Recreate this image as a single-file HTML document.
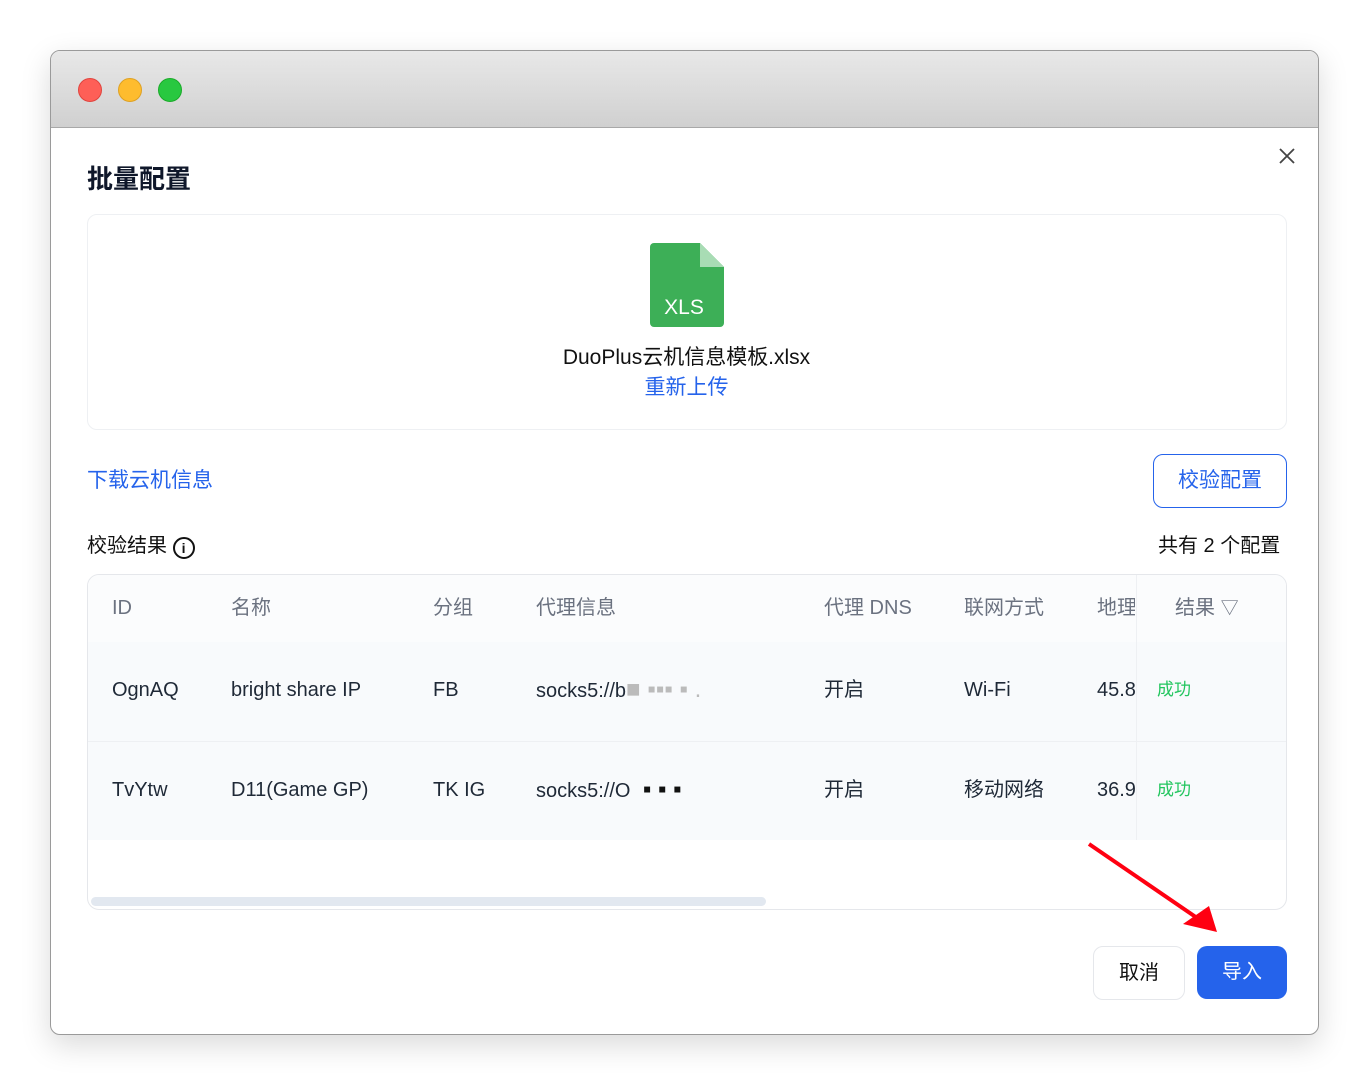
<!DOCTYPE html><html><head><meta charset="utf-8"><style>
body{margin:0;width:1369px;height:1085px;background:#fff;font-family:"Liberation Sans","Noto Sans CJK SC",sans-serif;position:relative;overflow:hidden}
.win{position:absolute;left:50px;top:50px;width:1267px;height:983px;border:1px solid #9a9a9a;border-radius:10px;overflow:hidden;box-shadow:0 10px 30px rgba(0,0,0,.15);background:#fff}
.tb{height:76px;background:linear-gradient(#e8e8e8,#d0d0d0);border-bottom:1px solid #a8a8a8}
.dot{position:absolute;top:27px;width:22px;height:22px;border-radius:50%}
.a{position:absolute;white-space:nowrap;line-height:24px}
.t{color:#1f2937;font-size:20px}
.hd{color:#6b7280;font-size:20px}
</style></head><body>
<div class="win"><div class="tb"></div>
<div class="dot" style="left:27px;background:#fe5f57;border:1px solid #e0443e"></div>
<div class="dot" style="left:67px;background:#febc2e;border:1px solid #dea123"></div>
<div class="dot" style="left:107px;background:#28c840;border:1px solid #1aab29"></div>
</div>
<div class="a" style="left:87px;top:164px;font-size:26px;line-height:30px;font-weight:bold;color:#0f172a">批量配置</div>
<svg class="a" style="left:1279px;top:148px" width="16" height="16"><path d="M1 1L15 15M15 1L1 15" stroke="#444" stroke-width="1.8"/></svg>
<div class="a" style="left:87px;top:214px;width:1198px;height:214px;border:1px solid #eef0f3;border-radius:10px"></div>
<svg class="a" style="left:650px;top:243px" width="74" height="84"><path d="M4 0H50L74 24V80a4 4 0 0 1-4 4H4a4 4 0 0 1-4-4V4a4 4 0 0 1 4-4z" fill="#3daf57"/><path d="M50 0V24H74z" fill="#a8dcb4"/><text x="34" y="71" font-size="21" fill="#fff" text-anchor="middle" font-family="Liberation Sans">XLS</text></svg>
<div class="a" style="left:0;width:1373px;text-align:center;top:346px;font-size:21px;color:#111">DuoPlus云机信息模板.xlsx</div>
<div class="a" style="left:0;width:1373px;text-align:center;top:376px;font-size:21px;color:#2563eb">重新上传</div>
<div class="a" style="left:87px;top:469px;font-size:21px;color:#2563eb">下载云机信息</div>
<div class="a" style="left:1153px;top:454px;width:132px;height:52px;border:1px solid #2563eb;border-radius:10px;color:#2563eb;font-size:21px;text-align:center;line-height:52px">校验配置</div>
<div class="a" style="left:87px;top:534px;font-size:20px;color:#111">校验结果 <span style="display:inline-block;width:18px;height:18px;border:2px solid #111;border-radius:50%;font-size:14px;line-height:18px;text-align:center;vertical-align:-1px;font-weight:bold">i</span></div>
<div class="a" style="left:1158px;top:534px;font-size:20px;color:#111">共有 2 个配置</div>
<div class="a" style="left:87px;top:574px;width:1198px;height:334px;border:1px solid #e5e7eb;border-radius:12px;overflow:hidden;line-height:normal">
<div style="position:absolute;top:0;left:0;right:0;height:67px;background:#fbfcfd;border-bottom:1px solid #eef0f3"></div>
<div style="position:absolute;top:67px;left:0;right:0;height:198px;background:#f8fafc"></div>
<div style="position:absolute;top:166px;left:0;right:0;border-top:1px solid #eef0f3"></div>
<div style="position:absolute;top:0;left:1048px;width:1px;height:265px;background:#eef0f3"></div>
<div style="position:absolute;top:322px;left:3px;width:675px;height:9px;border-radius:5px;background:#e2e8f0"></div>
</div>
<div class="a hd" style="left:112px;top:596px">ID</div><div class="a hd" style="left:231px;top:596px">名称</div><div class="a hd" style="left:433px;top:596px">分组</div><div class="a hd" style="left:536px;top:596px">代理信息</div><div class="a hd" style="left:824px;top:596px">代理 DNS</div><div class="a hd" style="left:964px;top:596px">联网方式</div><div class="a hd" style="left:1097px;top:596px;width:38px;overflow:hidden">地理</div><div class="a hd" style="left:1175px;top:596px">结果 <span style="font-size:18px">▽</span></div>
<div class="a t" style="left:112px;top:678px">OgnAQ</div><div class="a t" style="left:231px;top:678px">bright share IP</div><div class="a t" style="left:433px;top:678px">FB</div><div class="a t" style="left:536px;top:678px">socks5://b<span style="color:#bbb;font-size:24px">■ ▪▪▪ ▪ .</span></div><div class="a t" style="left:824px;top:678px">开启</div><div class="a t" style="left:964px;top:678px">Wi-Fi</div><div class="a t" style="left:1097px;top:678px;width:38px;overflow:hidden">45.8</div><div class="a" style="left:1157px;top:678px;color:#22c55e;font-size:17px">成功</div>
<div class="a t" style="left:112px;top:778px">TvYtw</div><div class="a t" style="left:231px;top:778px">D11(Game GP)</div><div class="a t" style="left:433px;top:778px">TK IG</div><div class="a t" style="left:536px;top:778px">socks5://O <span style="color:#111;font-size:24px">&nbsp;▪ ▪ ▪</span></div><div class="a t" style="left:824px;top:778px">开启</div><div class="a t" style="left:964px;top:778px">移动网络</div><div class="a t" style="left:1097px;top:778px;width:38px;overflow:hidden">36.9</div><div class="a" style="left:1157px;top:778px;color:#22c55e;font-size:17px">成功</div>
<svg class="a" style="left:1085px;top:840px" width="140" height="100"><path d="M4 4L118 82" stroke="#f01" stroke-width="4"/><path d="M132 92L98 84L124 66z" fill="#f01"/></svg>
<div class="a" style="left:1093px;top:946px;width:90px;height:52px;border:1px solid #e5e7eb;border-radius:10px;font-size:20px;text-align:center;line-height:52px;color:#111">取消</div>
<div class="a" style="left:1197px;top:946px;width:90px;height:53px;background:#2563eb;border-radius:10px;font-size:20px;text-align:center;line-height:53px;color:#fff">导入</div>
</body></html>
